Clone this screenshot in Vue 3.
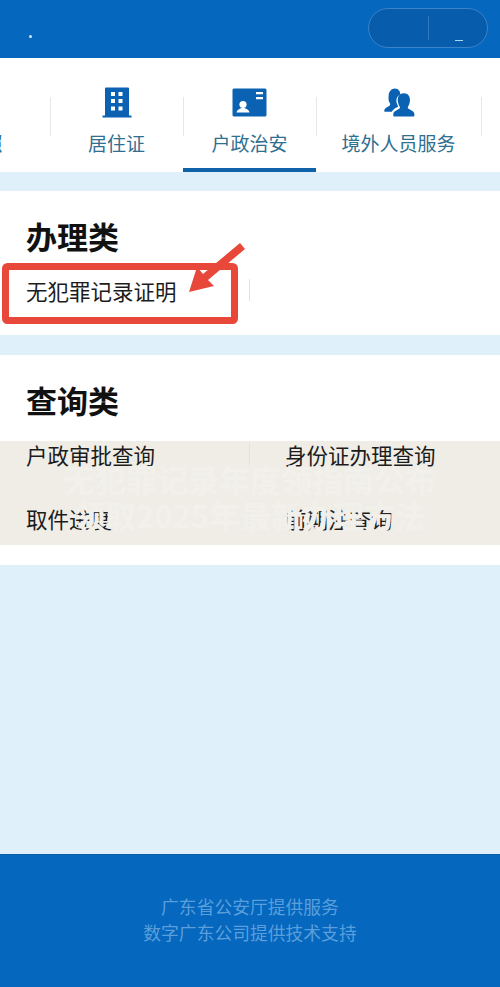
<script setup>
const tabs = [
  { label: '护照', icon: '' },
  { label: '居住证', icon: 'building' },
  { label: '户政治安', icon: 'card', active: true },
  { label: '境外人员服务', icon: 'users', wide: true },
]
const handle = [['无犯罪记录证明', '']]
const query = [
  ['户政审批查询', '身份证办理查询'],
  ['取件进度', '前期注查询'],
]
</script>

<template>
  <div class="page">
    <header class="top">
      <span class="dot"></span>
      <div class="pill">
        <span class="pill-side"></span>
        <span class="pill-side right"><i class="dash"></i></span>
      </div>
    </header>

    <nav class="tabs">
      <div
        v-for="t in tabs"
        :key="t.label"
        class="tab"
        :class="{ active: t.active, wide: t.wide }"
      >
        <div class="icon">
          <svg v-if="t.icon === 'building'" width="30" height="32" viewBox="0 0 30 32">
            <path fill="#0b62b3" d="M3 1.500 Q3 0.500 4 0.500 H26 Q27 0.500 27 1.500 V28.500 H29.500 V30.500 H0.500 V28.500 H3 Z" />
            <path fill="#fff" d="M9 5h4v4H9zM16.500 5h4v4h-4zM9 12h4v4H9zM16.500 12h4v4h-4zM9 19.500h4v4H9zM16.500 19.500h4v4h-4z" />
          </svg>
          <svg v-else-if="t.icon === 'card'" width="35" height="30" viewBox="0 0 35 30">
            <rect x="0.500" y="0.500" width="34" height="28" rx="1.500" fill="#0b62b3" />
            <path fill="#fff" d="M24 4h7v2.200h-7zM24 9h7v2.200h-7z" />
            <circle cx="11" cy="16.500" r="3.600" fill="#fff" />
            <path fill="#fff" d="M4.500 24.500 C5 21.500 8 21 9.500 20 H12.500 C14 21 17 21.500 17.500 24.500 Z" />
          </svg>
          <svg v-else-if="t.icon === 'users'" class="users" width="31" height="32" viewBox="0 0 32 32">
            <path fill="#0b62b3" d="M11 1 C15 1 17 4 16.800 7.500 C13.500 8.500 12.300 12 13 15.500 C13.300 17 14 18.500 14.800 19.500 C12.500 21 9.500 22 8 25 H1 C0 25 0 24 0.500 23 C1.500 20.500 4 20 6 18.500 C6.500 18 6.500 16.500 6 16 C4.500 14 4.500 11 4.800 8 C5 4 8 1 11 1 Z" />
            <path fill="#0b62b3" d="M20.500 6 C25 6 27 9.500 26.800 13.500 C26.600 16 26 18 24.800 19.500 C24.400 20.500 24.500 21.500 25.500 22 C27.500 23.500 30.500 24 31.300 27 C31.700 29 31.200 30 30 30 H11 C9.800 30 9.300 29 9.700 27 C10.500 24 13.500 23.500 15.500 22 C16.500 21.500 16.600 20.500 16.200 19.500 C15 18 14.400 16 14.200 13.500 C14 9.500 16 6 20.500 6 Z" />
          </svg>
        </div>
        <span class="tab-label">{{ t.label }}</span>
      </div>
    </nav>

    <main class="main">
      <section class="card first">
        <h2>办理类</h2>
        <div v-for="(r, i) in handle" :key="i" class="row">
          <div class="cell">{{ r[0] }}</div>
          <div class="cell">{{ r[1] }}</div>
        </div>
        <div class="mark">
          <svg width="250" height="85" viewBox="0 0 250 85">
            <rect x="5.500" y="23.500" width="229" height="54" rx="2" fill="none" stroke="#e8483a" stroke-width="7" />
            <path fill="#e8483a" d="M240 0 L245 6 L208 37 L214 43 L189 49 L197 24 L203 31 Z" />
          </svg>
        </div>
      </section>

      <section class="card second">
        <h2>查询类</h2>
        <div v-for="(r, i) in query" :key="i" class="row">
          <div class="cell">{{ r[0] }}</div>
          <div class="cell">{{ r[1] }}</div>
        </div>
      </section>
    </main>

    <footer class="foot">
      <p>广东省公安厅提供服务</p>
      <p>数字广东公司提供技术支持</p>
    </footer>

    <div class="band"></div>
    <div class="ghost">
      <p>无犯罪记录年度领指南公布</p>
      <p>领取2025年最新办理方法</p>
    </div>
  </div>
</template>

<style scoped>
.page {
  position: relative;
  width: 500px;
  height: 987px;
  overflow: hidden;
  display: flex;
  flex-direction: column;
  font-family: "Noto Sans CJK SC", "Noto Sans", sans-serif;
  background: #dff0fb;
}
.top {
  height: 58px;
  flex: none;
  background: #0567bd;
  display: flex;
  align-items: flex-start;
  justify-content: space-between;
  padding: 8px 12px 0 29px;
  box-sizing: border-box;
}
.dot {
  width: 3px;
  height: 3px;
  margin-top: 27px;
  border-radius: 50%;
  background: #cfe6f7;
}
.pill {
  width: 120px;
  height: 40px;
  box-sizing: border-box;
  border: 1px solid #3a84cc;
  border-radius: 20px;
  background: #075cab;
  display: flex;
}
.pill-side {
  width: 59px;
  margin: 7px 0;
  border-right: 1px solid #2f78bd;
}
.pill-side.right {
  border-right: 0;
  display: flex;
  justify-content: center;
  align-items: flex-end;
}
.dash {
  width: 8px;
  height: 1.500px;
  margin: 0 0 -1px 3px;
  background: #a9d8f2;
}
.tabs {
  height: 114px;
  flex: none;
  background: #fff;
  display: flex;
  margin-left: -83px;
  width: 583px;
}
.tab {
  position: relative;
  width: 133px;
  flex: none;
  display: flex;
  flex-direction: column;
  align-items: center;
  box-sizing: border-box;
  padding-top: 29px;
}
.tab.wide {
  width: 165px;
}
.tab::after {
  content: "";
  position: absolute;
  right: -1px;
  top: 39px;
  height: 39px;
  width: 1px;
  background: #e3e7ea;
}
.tab.active {
  border-bottom: 4px solid #0f62a8;
}
.icon {
  height: 32px;
  display: flex;
  align-items: center;
  justify-content: center;
}
.users {
  margin-left: 1px;
}
.tab-label {
  margin-top: 10px;
  font-size: 19px;
  line-height: 28px;
  color: #2f6f90;
}
.main {
  flex: 1;
  background: #dff0fb;
  padding-top: 19px;
  display: flex;
  flex-direction: column;
  gap: 20px;
}
.card {
  position: relative;
  background: #fff;
}
.card.first {
  height: 144px;
}
.card.second {
  height: 210px;
}
h2 {
  margin: 0;
  padding: 22px 0 0 26px;
  height: 46px;
  box-sizing: content-box;
  font-size: 31px;
  line-height: 46px;
  font-weight: 700;
  color: #111;
}
.row {
  position: relative;
  z-index: 2;
  height: 64px;
  display: grid;
  grid-template-columns: 250px 250px;
  align-items: center;
  font-size: 21.500px;
  color: #1c1c1c;
}
.cell {
  position: relative;
  padding-left: 26px;
  line-height: 32px;
  height: 32px;
}
.cell + .cell {
  padding-left: 35px;
}
.cell + .cell::before {
  content: "";
  position: absolute;
  left: -1px;
  top: 4px;
  height: 22px;
  width: 1px;
  background: #dfe2e4;
}
.mark {
  position: absolute;
  left: 0;
  top: 52px;
  z-index: 3;
  line-height: 0;
}
.foot {
  height: 133px;
  flex: none;
  background: #0567bd;
  border-top: 1px solid #0a5ea8;
  color: #5a9fdc;
  text-align: center;
  font-size: 17.800px;
  line-height: 26px;
  padding-top: 38px;
  box-sizing: border-box;
}
.foot p {
  margin: 0;
}
.band {
  position: absolute;
  left: 0;
  right: 0;
  top: 441px;
  height: 104px;
  background: #efede6;
  z-index: 1;
}
.ghost {
  position: absolute;
  left: 0;
  right: 0;
  top: 441px;
  height: 104px;
  z-index: 4;
  text-align: center;
  color: #f2f0ea;
  font-size: 31px;
  font-weight: 700;
  line-height: 36px;
  padding-top: 20px;
  box-sizing: border-box;
  text-shadow: 0 0 1px #f2f0ea;
}
.ghost p {
  margin: 0;
  white-space: nowrap;
}
</style>
